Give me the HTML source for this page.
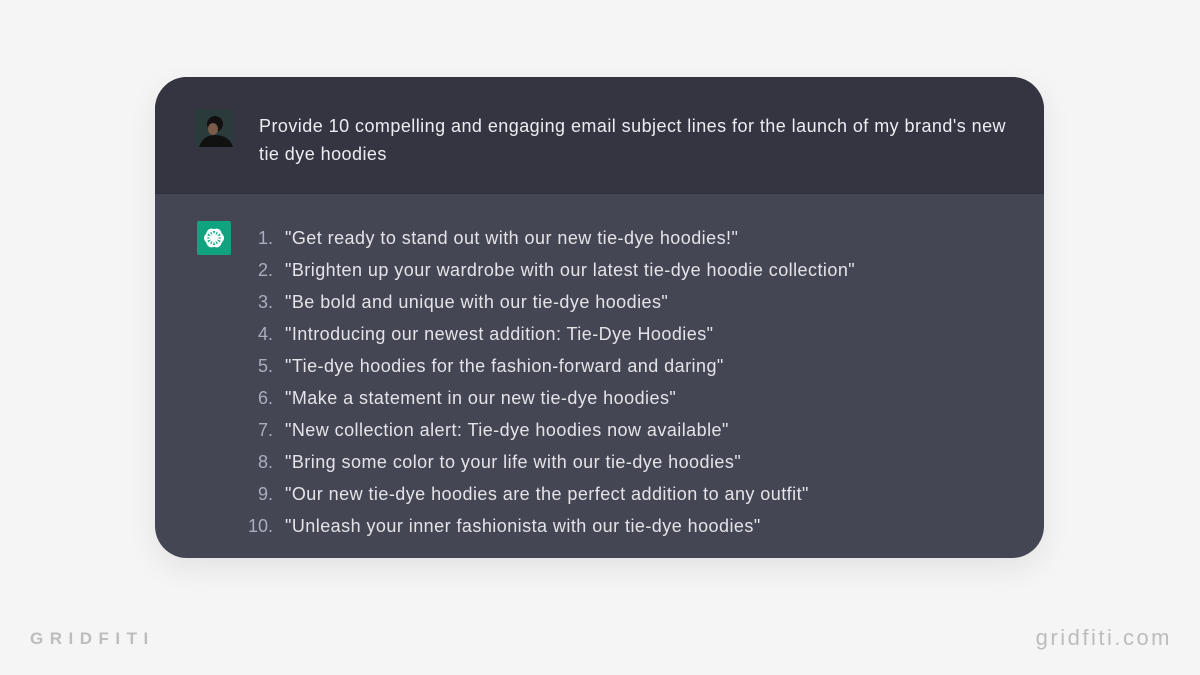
<!DOCTYPE html>
<html><head><style>
body{margin:0;width:1200px;height:675px;background:#f5f5f5;font-family:"Liberation Sans",Arial,sans-serif;position:relative;overflow:hidden}
.card{position:absolute;left:155px;top:77px;width:889px;height:481px;border-radius:32px;overflow:hidden;background:#444654;box-shadow:0 10px 30px rgba(0,0,0,.08)}
.head{position:absolute;left:0;top:0;width:100%;height:116px;background:#343541;border-bottom:1px solid #2e2f3a}
.av{position:absolute;left:40px;top:32px;width:38px;height:38px;background:#2b3a3a;overflow:hidden}
.q{position:absolute;left:104px;top:35px;width:760px;color:#ececf1;font-size:18px;line-height:28px;letter-spacing:.45px}
.logo{position:absolute;left:42px;top:144px;width:34px;height:34px;background:#10a37f;border-radius:2px}
.list{position:absolute;left:80px;top:145px;color:#e3e3e8;font-size:18px;line-height:32px;margin:0;padding:0;list-style:none;letter-spacing:.45px}
.list li{position:relative;padding-left:50px;white-space:nowrap}
.list li span{position:absolute;right:calc(100% - 38px);color:#acacbe;letter-spacing:0}
.fl{position:absolute;left:30px;top:629px;color:#bdbdbd;font-size:17px;letter-spacing:6.5px;font-weight:bold}
.fr{position:absolute;right:28px;top:625px;color:#bdbdbd;font-size:22px;letter-spacing:2.5px}
</style></head><body>
<div class="card">
<div class="head">
<div class="av"><svg width="38" height="38"><circle cx="20" cy="15" r="8" fill="#111"/><ellipse cx="18" cy="20" rx="5" ry="6" fill="#7a5a48"/><path d="M4 38 Q8 26 20 26 Q34 26 38 38Z" fill="#111"/></svg></div>
<div class="q">Provide 10 compelling and engaging email subject lines for the launch of my brand's new tie dye hoodies</div>
</div>
<div class="logo"><svg width="34" height="34" viewBox="0 0 34 34" fill="none" stroke="#fff" stroke-width="1.7"><g transform="translate(17 17)"><ellipse rx="3.5" ry="8" transform="rotate(0) translate(4 0)"/><ellipse rx="3.5" ry="8" transform="rotate(60) translate(4 0)"/><ellipse rx="3.5" ry="8" transform="rotate(120) translate(4 0)"/><ellipse rx="3.5" ry="8" transform="rotate(180) translate(4 0)"/><ellipse rx="3.5" ry="8" transform="rotate(240) translate(4 0)"/><ellipse rx="3.5" ry="8" transform="rotate(300) translate(4 0)"/></g></svg></div>
<ul class="list">
<li><span>1.</span>"Get ready to stand out with our new tie-dye hoodies!"</li>
<li><span>2.</span>"Brighten up your wardrobe with our latest tie-dye hoodie collection"</li>
<li><span>3.</span>"Be bold and unique with our tie-dye hoodies"</li>
<li><span>4.</span>"Introducing our newest addition: Tie-Dye Hoodies"</li>
<li><span>5.</span>"Tie-dye hoodies for the fashion-forward and daring"</li>
<li><span>6.</span>"Make a statement in our new tie-dye hoodies"</li>
<li><span>7.</span>"New collection alert: Tie-dye hoodies now available"</li>
<li><span>8.</span>"Bring some color to your life with our tie-dye hoodies"</li>
<li><span>9.</span>"Our new tie-dye hoodies are the perfect addition to any outfit"</li>
<li><span>10.</span>"Unleash your inner fashionista with our tie-dye hoodies"</li>
</ul>
</div>
<div class="fl">GRIDFITI</div>
<div class="fr">gridfiti.com</div>
</body></html>
